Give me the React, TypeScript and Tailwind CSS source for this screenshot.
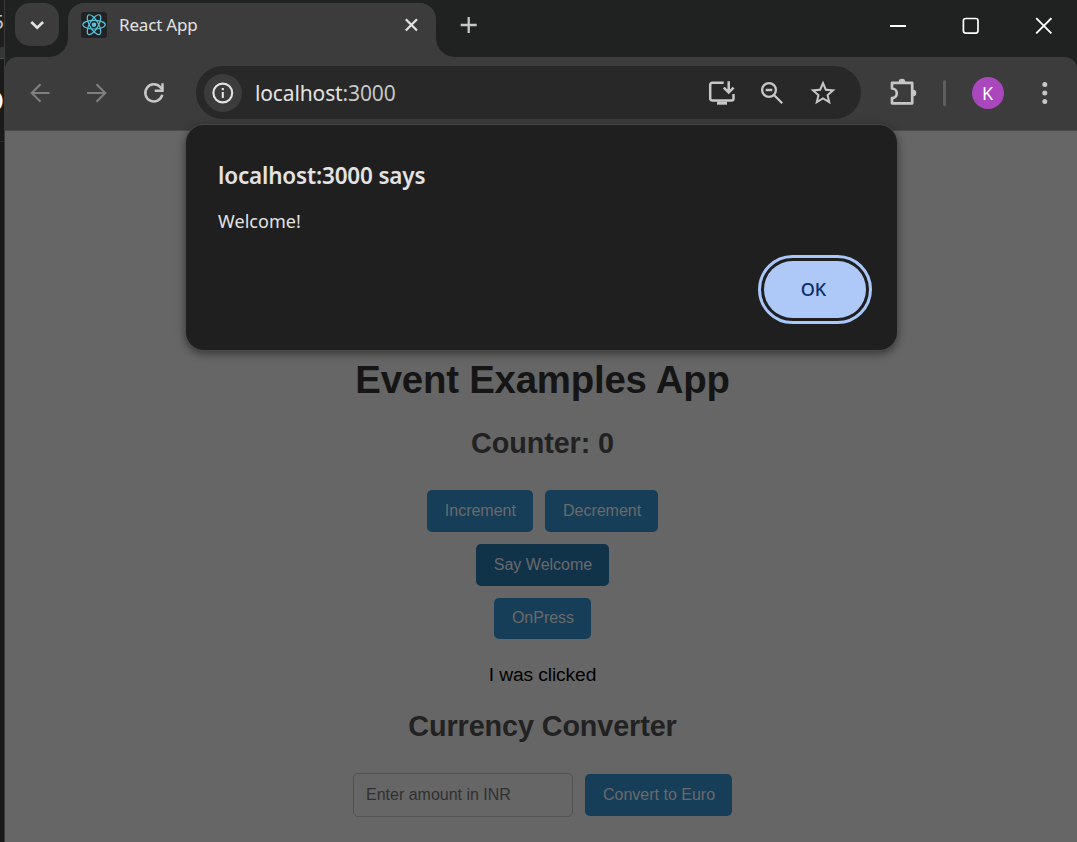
import type { ReactNode } from "react";
import { MdStarBorder } from "react-icons/md";

const uiFont = "font-['Segoe_UI','Noto_Sans',sans-serif]";

function ReactLogo() {
  return (
    <svg className="h-[26px] w-[26px] shrink-0 rounded-[3px] bg-[#222222]" viewBox="0 0 26 26" fill="none" stroke="#58c4dc" strokeWidth="1.2">
      <ellipse cx="13" cy="12.7" rx="11.2" ry="4.3" />
      <ellipse cx="13" cy="12.7" rx="11.2" ry="4.3" transform="rotate(60 13 12.7)" />
      <ellipse cx="13" cy="12.7" rx="11.2" ry="4.3" transform="rotate(120 13 12.7)" />
      <circle cx="13" cy="12.7" r="2.3" fill="#58c4dc" stroke="none" />
    </svg>
  );
}

function BackgroundWindow() {
  return (
    <div className="flex w-[5px] shrink-0 flex-col overflow-hidden border-r border-[#3b3b3b] bg-[#1a1a1a]">
      <div className="flex h-[47px] justify-end bg-[#1e1e1e] pt-2.5 font-['Noto_Sans',sans-serif] text-[20px] leading-[24px] text-[#c4c4d0]">
        <span>5</span>
      </div>
      <div className="h-3 border-b border-[#4a4a4a] bg-[#353535]" />
      <div className="flex h-[83px] justify-end border-b border-[#2c2c2c] pt-[28px] font-['Noto_Sans',sans-serif] text-[27px] leading-[28px] text-white">
        <span>O</span>
      </div>
    </div>
  );
}

function TabStrip() {
  return (
    <header className="flex h-[57px] shrink-0 bg-[#3c3c3c]">
      <div className="w-[63px] shrink-0 rounded-br-[19px] bg-[#202221] pl-[10px] pt-[3px]">
        <button className="flex h-[43px] w-[44px] items-center justify-center rounded-[15px] bg-[#3c3c3c]">
          <svg className="h-[10px] w-[16px]" viewBox="0 0 16 10" fill="none" stroke="#e3e3e3" strokeWidth="2.6">
            <path d="M2.3 2l5.9 5.7L14.1 2" />
          </svg>
        </button>
      </div>
      <div className="w-[368px] shrink-0 bg-[linear-gradient(#202221_50%,#3c3c3c_50%)] pt-[3px]">
        <div className="flex h-[54px] items-center rounded-t-[16px] bg-[#3c3c3c] pb-[10px] pl-[13px] pr-[18px]">
          <ReactLogo />
          <span className={`ml-3 text-[17px] leading-6 tracking-[-0.18px] text-[#e3e3e3] ${uiFont}`}>React App</span>
          <svg className="ml-auto h-[14px] w-[14px]" viewBox="0 0 14 14" fill="none" stroke="#e3e3e3" strokeWidth="2.3">
            <path d="M1.8 1.3l11.2 11.2M13 1.3L1.8 12.5" />
          </svg>
        </div>
      </div>
      <div className="flex grow items-start rounded-bl-[19px] bg-[#202221] pl-[24px] pr-[25px] pt-[17px]">
        <svg className="h-[17px] w-[17px]" viewBox="0 0 17 17" stroke="#c7c7c7" strokeWidth="2.3">
          <path d="M8.7 0v16M.7 8h16" />
        </svg>
        <div className="ml-auto flex items-center gap-[56px]">
          <svg className="h-[18px] w-[17px]" viewBox="0 0 17 18" stroke="#fff" strokeWidth="2">
            <path d="M1 9h16" />
          </svg>
          <svg className="h-[18px] w-[17px]" viewBox="0 0 17 18" fill="none" stroke="#fff" strokeWidth="1.7">
            <rect x="1.4" y="1.5" width="14.6" height="14.6" rx="2.3" />
          </svg>
          <svg className="h-[18px] w-[17px]" viewBox="0 0 17 18" stroke="#fff" strokeWidth="1.9">
            <path d="M1.2 1.2l15.2 15.2M16.4 1.2L1.2 16.4" />
          </svg>
        </div>
      </div>
    </header>
  );
}

function Toolbar() {
  return (
    <div className="shrink-0 bg-[#202221]">
      <nav className="flex h-[74px] items-center rounded-t-[12px] border-b border-[#4b4b4b] bg-[#3c3c3c] pb-px pl-[25px]">
        <svg className="h-[20px] w-[20px] shrink-0" viewBox="0 0 20 20" fill="none" stroke="#7f7f7f" strokeWidth="2">
          <path d="M19.5 10H2.2M10.5 1.2L1.7 10l8.8 8.8" />
        </svg>
        <svg className="ml-[37px] h-[20px] w-[20px] shrink-0" viewBox="0 0 20 20" fill="none" stroke="#7f7f7f" strokeWidth="2">
          <path d="M0 10h17.8M9.5 1.2l8.8 8.8-8.8 8.8" />
        </svg>
        <svg className="ml-[36px] h-[22px] w-[22px] shrink-0" viewBox="0 0 22 22" fill="none" stroke="#c7c7c7" strokeWidth="2.5">
          <path d="M19.3 12.8A8.6 8.6 0 1 1 17.4 5.2L19 7.2" />
          <path d="M19.5 1.2v7.6h-7.8" />
        </svg>

        <div className="mb-[2px] ml-[31px] flex h-[53px] w-[665px] shrink-0 items-center rounded-full bg-[#282828] pl-2 pr-[23px] pt-px">
          <div className="flex h-[38px] w-[38px] items-center justify-center rounded-full bg-[#3c3c3c]">
            <svg className="h-[22px] w-[22px]" viewBox="0 0 22 22" fill="none" stroke="#e3e3e3" strokeWidth="2.1">
              <circle cx="10.8" cy="11" r="9.4" />
              <path d="M10.8 10v6M10.8 6v2.2" />
            </svg>
          </div>
          <span className={`ml-[13px] text-[21px] leading-7 tracking-[-0.13px] text-[#e3e3e3] ${uiFont}`}>
            localhost<span className="text-[#c7c7c7]">:3000</span>
          </span>
          <div className="ml-auto flex items-center">
            <svg className="h-[26px] w-[28px]" viewBox="0 0 28 26" fill="none" stroke="#c7c7c7" strokeWidth="2.5">
              <path d="M15.7 2.7H4.2A2 2 0 0 0 2.2 4.7v13.8a2 2 0 0 0 2 2h19.3a2 2 0 0 0 2-2V14" />
              <path d="M20.7 1.2v10.6M15.8 7.6l4.9 4.9 4.9-4.9" />
              <path d="M9 21.5h10v3.2H9z" fill="#c7c7c7" stroke="none" />
            </svg>
            <svg className="ml-[24px] h-[24px] w-[24px]" viewBox="0 0 24 24" fill="none" stroke="#c7c7c7" strokeWidth="2.3">
              <circle cx="9" cy="9" r="6.9" />
              <path d="M14 14l8.2 8.2M5.7 9h6.6" />
            </svg>
            <MdStarBorder className="ml-[24px] h-[30px] w-[30px] text-[#c7c7c7]" />
          </div>
        </div>

        <svg className="ml-[27px] h-[30px] w-[30px] shrink-0" viewBox="0 0 30 30" fill="none" stroke="#c7c7c7" strokeWidth="2.7" strokeLinejoin="round">
          <path d="M4 4.9h20.2v20.4H4v-5.2a4.8 4.8 0 0 0 0-9.6z" />
          <path d="M10.7 4a3.3 3.3 0 0 1 6.6 0zM25 11.8a3.3 3.3 0 0 1 0 6.6z" fill="#c7c7c7" stroke="none" />
        </svg>
        <div className="ml-[25px] h-[26px] w-[3px] shrink-0 rounded-full bg-[#5f5f5f]" />
        <div className={`ml-[26px] flex h-8 w-8 shrink-0 items-center justify-center rounded-full bg-[#ab47bc] pr-px text-[18px] text-white ${uiFont}`}>K</div>
        <svg className="ml-[38px] h-[24px] w-[6px] shrink-0" viewBox="0 0 6 24" fill="#c7c7c7">
          <circle cx="2.8" cy="3.4" r="2.5" />
          <circle cx="2.8" cy="12" r="2.5" />
          <circle cx="2.8" cy="20.6" r="2.5" />
        </svg>
      </nav>
    </div>
  );
}

function AlertDialog() {
  return (
    <div
      role="alertdialog"
      className={`absolute left-[186px] top-[125px] flex h-[225px] w-[711px] flex-col rounded-[18px] bg-[#1f1f1f] pl-8 pr-[31px] pt-[36px] shadow-[0_0_0_1px_rgba(80,80,80,0.6),0_3px_8px_1px_rgba(0,0,0,0.45)] ${uiFont}`}
    >
      <h2 className="text-[22.5px] font-semibold leading-[30px] tracking-[-0.18px] text-[#e3e3e3]">localhost:3000 says</h2>
      <p className="mt-[17px] text-[18px] leading-[26px] tracking-[0.05px] text-[#e3e3e3]">Welcome!</p>
      <button className="mt-[27px] h-[57px] w-[102px] self-end rounded-full bg-[#aec9f7] pr-[3px] text-[18px] font-medium text-[#062e6f] outline-[3px] outline-offset-[3px] outline-[#a8c7fa] outline-solid">
        OK
      </button>
    </div>
  );
}

function PageButton({ children, className = "h-[42px] bg-[#173e59]" }: { children: ReactNode; className?: string }) {
  return <button className={`rounded-[5px] pb-px pl-[18px] pr-[17px] text-[16px] text-[#6a6a6a] ${className}`}>{children}</button>;
}

function Page() {
  return (
    <main className="flex grow flex-col items-center bg-[#666666] pl-[3px] pt-[226px] font-['Liberation_Sans',Arial,sans-serif]">
      <h1 className="text-[38.4px] font-bold leading-[46px] tracking-[-0.22px] text-[#151515]">Event Examples App</h1>
      <h2 className="mt-[23px] text-[28.8px] font-bold leading-[34px] tracking-[-0.12px] text-[#222222]">Counter: 0</h2>
      <div className="mt-[30px] flex gap-3">
        <PageButton>Increment</PageButton>
        <PageButton>Decrement</PageButton>
      </div>
      <PageButton className="mt-3 h-[42px] bg-[#10334a]">Say Welcome</PageButton>
      <PageButton className="mt-3 h-[41px] bg-[#173e59]">OnPress</PageButton>
      <p className="mt-[25px] text-[19.2px] leading-[22px] tracking-[-0.1px] text-black">I was clicked</p>
      <h2 className="mt-[23px] text-[28.8px] font-bold leading-[34px] tracking-[-0.12px] text-[#222222]">Currency Converter</h2>
      <div className="mt-[30px] flex items-center gap-3">
        <input
          className="h-[44px] w-[220px] rounded-[5px] border border-[#525252] px-3 pb-px text-[16px] placeholder:text-[#303030]"
          placeholder="Enter amount in INR"
        />
        <PageButton>Convert to Euro</PageButton>
      </div>
    </main>
  );
}

export default function App() {
  return (
    <div className="relative flex h-[842px] w-[1077px] overflow-hidden">
      <BackgroundWindow />
      <div className="flex w-[1072px] flex-col">
        <TabStrip />
        <Toolbar />
        <Page />
      </div>
      <AlertDialog />
    </div>
  );
}
